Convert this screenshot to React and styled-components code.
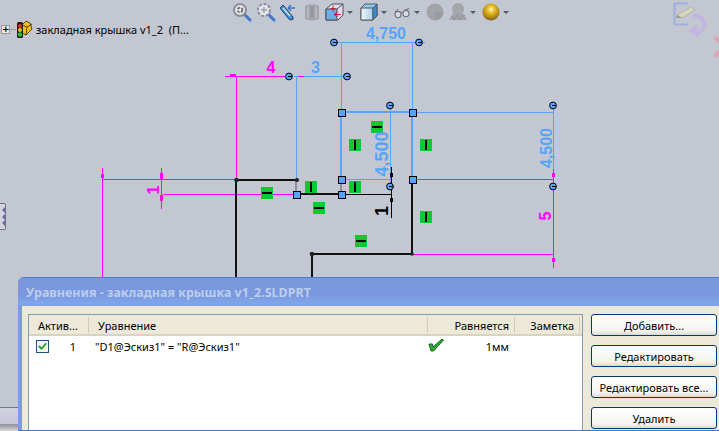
import React from "react";
import styled, { createGlobalStyle } from "styled-components";

const Global = createGlobalStyle`
  html, body { margin: 0; padding: 0; background: #c3c7d2; }
  #root { width: 719px; height: 431px; }
`;

const BLUE = "#55a5ff";
const PINK = "#ff00ff";
const UI_FONT = `"Noto Sans", "DejaVu Sans", sans-serif`;

// sketch data, coordinates are the model space of the graphics area
const blueLines = [
  [296, 76, 296, 180],
  [293, 76, 347, 76],
  [330, 42, 424, 42],
  [341, 42, 341, 112],
  [412, 42, 412, 112],
  [341, 179, 390, 179],
  [390, 105, 390, 186],
  [412, 112, 553, 112],
  [553, 105, 553, 168],
];
const pinkLines = [
  [102, 167, 102, 277],
  [102, 179, 237, 179],
  [161, 167, 161, 208],
  [162, 194, 296, 194],
  [224, 76, 284, 76],
  [297, 76, 303, 76],
  [236, 76, 236, 179],
  [412, 179, 553, 179],
  [412, 254, 553, 254],
  [553, 168, 553, 267],
];
const blueThick = [
  [340, 112, 413, 112],
  [341, 112, 341, 179],
  [412, 112, 412, 179],
];
const blackThick = [
  [236, 180, 298, 180],
  [236, 180, 236, 280],
  [297, 194, 341, 194],
  [412, 179, 412, 255],
  [413, 254, 312, 254],
  [312, 254, 312, 280],
];
const handles = [
  [289, 76], [347, 76], [334, 42], [419, 42], [390, 105],
  [390, 186], [553, 105], [553, 186],
];
const squares = [
  [341, 112], [412, 112], [341, 179], [412, 179], [296, 194], [341, 194],
];
const horizontal = [[267, 193], [319, 208], [377, 127], [361, 241]];
const vertical = [[311, 187], [355, 187], [355, 145], [426, 145], [426, 217]];

const Ln = ({ l, ...rest }) => <line x1={l[0]} y1={l[1]} x2={l[2]} y2={l[3]} {...rest} />;

const Sketch = () => (
  <SketchSvg width="719" height="431" viewBox="0 0 719 431">
    <g strokeWidth="1" shapeRendering="crispEdges">
      {blueLines.map((l, i) => <Ln key={i} l={l.map((v) => v + 0.5)} stroke={BLUE} />)}
      {pinkLines.map((l, i) => <Ln key={i} l={l.map((v) => v + 0.5)} stroke={PINK} />)}
    </g>
    <g fill={PINK} shapeRendering="crispEdges">
      <rect x="101" y="174" width="3" height="4" />
      <rect x="160" y="173" width="3" height="6" />
      <rect x="160" y="195" width="3" height="6" />
      <rect x="230" y="74" width="6" height="3" />
      <rect x="552" y="173" width="3" height="4" />
      <rect x="552" y="258" width="3" height="4" />
    </g>
    <g stroke="#8c8e96" strokeWidth="2" shapeRendering="crispEdges">
      <line x1="296" y1="181" x2="296" y2="194" />
      <line x1="341" y1="180" x2="341" y2="194" />
    </g>
    <g stroke={BLUE} strokeWidth="2" shapeRendering="crispEdges">
      {blueThick.map((l, i) => <Ln key={i} l={l} />)}
    </g>
    <g stroke="#111" strokeWidth="2" shapeRendering="crispEdges">
      {blackThick.map((l, i) => <Ln key={i} l={l} />)}
    </g>
    <g stroke="#000" strokeWidth="1" shapeRendering="crispEdges">
      <line x1="342" y1="194.5" x2="392" y2="194.5" />
      <line x1="391.5" y1="167" x2="391.5" y2="218" />
    </g>
    <g fill="#000" shapeRendering="crispEdges">
      <rect x="390" y="173" width="3" height="4" />
      <rect x="390" y="198" width="3" height="4" />
    </g>
    <g fill="#222">
      <circle cx="236.5" cy="180" r="2.3" />
      <circle cx="297" cy="180" r="2" />
      <circle cx="312" cy="254" r="2.3" />
      <circle cx="412" cy="254" r="1.8" />
    </g>
    {handles.map(([x, y], i) => (
      <g key={i}>
        <circle cx={x} cy={y + 0.5} r="3.4" fill={BLUE} stroke="#000" strokeWidth="1" />
        <line x1={x - 1} y1={y + 0.5} x2={x + 3} y2={y + 0.5} stroke="#000" strokeWidth="1" />
      </g>
    ))}
    {squares.map(([x, y], i) => (
      <rect key={i} x={x - 3} y={y - 3} width="7" height="7" fill={BLUE} stroke="#000" strokeWidth="1" shapeRendering="crispEdges" />
    ))}
    {horizontal.map(([x, y], i) => (
      <g key={i} shapeRendering="crispEdges">
        <rect x={x - 6} y={y - 6} width="12" height="12" fill="#0cc832" />
        <rect x={x - 5} y={y - 1} width="10" height="2" fill="#000" />
      </g>
    ))}
    {vertical.map(([x, y], i) => (
      <g key={i} shapeRendering="crispEdges">
        <rect x={x - 6} y={y - 6} width="12" height="12" fill="#0cc832" />
        <rect x={x - 1} y={y - 5} width="2" height="10" fill="#000" />
      </g>
    ))}
    <DimText x="271" y="73" fill={PINK} $size={16} textAnchor="middle">4</DimText>
    <DimText x="315.5" y="73" fill={BLUE} $size={16} textAnchor="middle">3</DimText>
    <DimText x="386" y="39" fill={BLUE} $size={16} textAnchor="middle">4,750</DimText>
    <DimText transform="translate(388 154) rotate(-90)" fill={BLUE} $size={18} textAnchor="middle">4,500</DimText>
    <DimText transform="translate(552 148) rotate(-90)" fill={BLUE} $size={16} textAnchor="middle">4,500</DimText>
    <DimText transform="translate(159 190) rotate(-90)" fill={PINK} $size={16} textAnchor="middle">1</DimText>
    <DimText transform="translate(388 211) rotate(-90)" fill="#000" $size={18} textAnchor="middle">1</DimText>
    <DimText transform="translate(551 216) rotate(-90)" fill={PINK} $size={16} textAnchor="middle">5</DimText>
  </SketchSvg>
);

const Magnifier = ({ dashed }) => (
  <svg width="20" height="20" viewBox="0 0 20 20">
    <line x1="12" y1="12" x2="18" y2="18" stroke="#3f78c8" strokeWidth="3" strokeLinecap="round" />
    <circle cx="8" cy="8" r="6" fill="#e4e6ea" stroke="#8a8e98" strokeWidth="2" strokeDasharray={dashed ? "3 1.5" : undefined} />
    {dashed ? (
      <path d="M5 8h6M8 5v6" stroke="#9a9ea6" strokeWidth="1.4" />
    ) : (
      <circle cx="8" cy="8" r="2.4" fill="none" stroke="#5c6068" strokeWidth="1.6" strokeDasharray="2.4 1.4" />
    )}
  </svg>
);

const PrevView = () => (
  <svg width="20" height="20" viewBox="0 0 20 20">
    <path d="M2 6 L5 3 L15 15 Q16 18 13 18 Q11 18 10 16 Z" fill="#3f8fd8" stroke="#2c3f63" strokeWidth="1" />
    <path d="M5 6 L12 14" stroke="#cfe6fa" strokeWidth="1.4" />
    <path d="M10 6h7M10 6l3-3M10 6l3 3" fill="none" stroke="#3f78c8" strokeWidth="1.6" />
  </svg>
);

const SectionView = () => (
  <svg width="20" height="20" viewBox="0 0 20 20">
    <path d="M3 4 Q10 0 17 4 V17 Q10 20 3 17 Z" fill="#a4a6ac" />
    <path d="M6 5 V16 M14 5 V16" stroke="#b5b7bc" strokeWidth="2" />
    <path d="M8 5 Q10 4 12 5 V16 H8 Z" fill="#97999f" />
  </svg>
);

const OrientCube = () => (
  <svg width="20" height="20" viewBox="0 0 20 20">
    <path d="M1 7 L7 2 H18 V13 L13 18 H1 Z" fill="#dfe1e6" stroke="#4a4e58" strokeWidth="1" />
    <path d="M1 7 H12 V18 H1 Z" fill="#6aaeea" stroke="#4a4e58" strokeWidth="1" />
    <path d="M12 7 L18 2" stroke="#4a4e58" strokeWidth="1" />
    <path d="M8 3.5v6M5.5 6.5h5M9 12.5h7M12 10l-3 2.5 3 2.5" fill="none" stroke="#c41f2e" strokeWidth="1" />
  </svg>
);

const DisplayBox = () => (
  <svg width="20" height="20" viewBox="0 0 20 20">
    <defs>
      <linearGradient id="boxFront" x1="0" x2="1" y1="0" y2="0">
        <stop offset="0" stopColor="#f2f6fa" />
        <stop offset="1" stopColor="#a8cfee" />
      </linearGradient>
    </defs>
    <path d="M2 6 L6 2 H18 V14 L14 18 H2 Z" fill="#8fc6ee" stroke="#55585f" strokeWidth="1" />
    <path d="M2 6 H14 V18 H2 Z" fill="url(#boxFront)" stroke="#55585f" strokeWidth="1" />
    <path d="M14 6 L18 2 V14 L14 18 Z" fill="#2f8ee0" stroke="#55585f" strokeWidth="1" />
  </svg>
);

const Glasses = () => (
  <svg width="20" height="20" viewBox="0 0 20 20">
    <ellipse cx="6" cy="12.5" rx="3" ry="3.2" fill="#d8dbe2" stroke="#6f727b" strokeWidth="1.2" />
    <ellipse cx="14" cy="11.5" rx="3" ry="3.2" fill="#d8dbe2" stroke="#6f727b" strokeWidth="1.2" />
    <path d="M9 11 Q10 9.5 11 10.5 M3 10 L6 7 M13 8 L17 6.5" fill="none" stroke="#6f727b" strokeWidth="1" />
  </svg>
);

const GraySphere = () => (
  <svg width="20" height="20" viewBox="0 0 20 20">
    <circle cx="10" cy="10" r="8.5" fill="#a2a4aa" />
    <path d="M10 10 H18.5 A8.5 8.5 0 0 1 10 18.5 Z" fill="#999ba1" />
  </svg>
);

const Scene = () => (
  <svg width="20" height="20" viewBox="0 0 20 20">
    <circle cx="10" cy="7" r="6" fill="#a4a6ac" />
    <path d="M5 11 H15 L19 18 H1 Z" fill="#a4a6ac" />
    <path d="M3 14 L8 18 M8 12 L14 18 M13 12 L18 17 M17 13 L11 18 M11 12 L5 18" stroke="#8f9197" strokeWidth="1" />
  </svg>
);

const GoldBall = () => (
  <svg width="20" height="20" viewBox="0 0 20 20">
    <defs>
      <radialGradient id="gold" cx="0.5" cy="0.35" r="0.65">
        <stop offset="0" stopColor="#fff6c0" />
        <stop offset="0.35" stopColor="#e8bb22" />
        <stop offset="0.8" stopColor="#a87f12" />
        <stop offset="1" stopColor="#6d5a20" />
      </radialGradient>
    </defs>
    <circle cx="10" cy="10" r="8.5" fill="url(#gold)" />
  </svg>
);

const tools = [
  { id: "zoomfit", icon: <Magnifier />, gap: 0 },
  { id: "zoomarea", icon: <Magnifier dashed />, gap: 4 },
  { id: "prev", icon: <PrevView />, gap: 2 },
  { id: "section", icon: <SectionView />, gap: 4 },
  { id: "orient", icon: <OrientCube />, gap: 3, caret: true },
  { id: "display", icon: <DisplayBox />, gap: 6, caret: true },
  { id: "hide", icon: <Glasses />, gap: 5, caret: true },
  { id: "sphere", icon: <GraySphere />, gap: 5 },
  { id: "scene", icon: <Scene />, gap: 3, caret: true },
  { id: "gold", icon: <GoldBall />, gap: 5, caret: true },
];

const TrafficIcon = () => (
  <svg width="17" height="18" viewBox="0 0 17 18">
    <path d="M6 5 L10 1 L14 3 L16 9 L10 15 L6 13 Z" fill="#f4c020" stroke="#5a4410" strokeWidth="1" />
    <path d="M6 5 L11 7 L16 4 M11 7 L10 15" fill="none" stroke="#5a4410" strokeWidth="1" />
    <rect x="1" y="2" width="6" height="16" rx="1.5" fill="#1d1d1d" />
    <circle cx="4" cy="6" r="2" fill="#d63018" />
    <circle cx="4" cy="10" r="2" fill="#e8c020" />
    <circle cx="4" cy="14.5" r="2.2" fill="#28c030" />
  </svg>
);

const CornerIcons = () => (
  <svg width="79" height="60" viewBox="0 0 79 60">
    <path d="M48 3.5 H34.5 V24.5 H48" fill="none" stroke="#a2aee0" strokeWidth="2" />
    <path d="M37 15 L51 7 L55 10 L42 18 Z" fill="#d8d5b8" stroke="#b4b4b8" strokeWidth="1" />
    <path d="M37 15 L42 18 L36 18 Z" fill="#9a9aa0" />
    <path d="M53 15 Q66 17 64 27 Q60 36 52 31" fill="none" stroke="#c2b5e0" strokeWidth="4" />
    <path d="M48 30 L57 24 L58 38 Z" fill="#c2b5e0" />
    <path d="M75 37 L79 42 M75 57 L79 51" stroke="#dfa4b0" strokeWidth="4" />
  </svg>
);

const Check = () => (
  <svg width="12" height="12" viewBox="0 0 12 12">
    <path d="M2 6 L5 9 L10 3" fill="none" stroke="#21a121" strokeWidth="2" />
  </svg>
);

const BigCheck = () => (
  <svg width="16" height="16" viewBox="0 0 16 16">
    <path d="M1 7 L3 14 L5.5 14 L15.5 3 L14 2 L5 10 L4.5 7 Z" fill="#36a836" stroke="#0c6a1c" strokeWidth="1" />
  </svg>
);

const App = () => (
  <Stage>
    <Global />
    <Sketch />
    <Toolbar>
      {tools.map((t) => (
        <ToolItem key={t.id} $gap={t.gap}>
          {t.icon}
          {t.caret && <Caret />}
        </ToolItem>
      ))}
    </Toolbar>
    <Corner>
      <CornerIcons />
    </Corner>
    <TreeRow>
      <Expander>+</Expander>
      <TreeDash />
      <TrafficIcon />
      <TreeLabel>закладная крышка v1_2  (П...</TreeLabel>
    </TreeRow>
    <SideTab>
      <span />
      <span />
      <span />
    </SideTab>
    <BottomLeft />
    <Dialog>
      <TitleBar>Уравнения - закладная крышка v1_2.SLDPRT</TitleBar>
      <DialogBody>
        <ListBox>
          <ListHead>
            <HeadCell $w={60}>Актив...</HeadCell>
            <HeadCell $w={339} $pad={9}>Уравнение</HeadCell>
            <HeadCell $w={87} $right>Равняется</HeadCell>
            <HeadCell $w={65} $right>Заметка</HeadCell>
          </ListHead>
          <ListRow>
            <RowCheck>
              <CheckBox><Check /></CheckBox>
            </RowCheck>
            <RowNum>1</RowNum>
            <RowEq>"D1@Эскиз1" = "R@Эскиз1"</RowEq>
            <RowState><BigCheck /></RowState>
            <RowValue>1мм</RowValue>
          </ListRow>
        </ListBox>
        <Buttons>
          <PushButton>Добавить...</PushButton>
          <PushButton>Редактировать</PushButton>
          <PushButton>Редактировать все...</PushButton>
          <PushButton>Удалить</PushButton>
        </Buttons>
      </DialogBody>
    </Dialog>
  </Stage>
);

const Stage = styled.div`
  position: relative;
  width: 719px;
  height: 431px;
  overflow: hidden;
  background: #c3c7d2;
  font-family: ${UI_FONT};
`;

const SketchSvg = styled.svg`
  position: absolute;
  left: 0;
  top: 0;
`;

const DimText = styled.text`
  font-family: "Liberation Sans", sans-serif;
  font-weight: 700;
  font-size: ${(p) => p.$size}px;
`;

const Toolbar = styled.div`
  position: absolute;
  left: 232px;
  top: 2px;
  display: flex;
  align-items: center;
  height: 20px;
`;

const ToolItem = styled.div`
  display: flex;
  align-items: center;
  margin-left: ${(p) => p.$gap}px;
`;

const Caret = styled.i`
  width: 0;
  height: 0;
  margin-left: 2px;
  border-left: 3px solid transparent;
  border-right: 3px solid transparent;
  border-top: 3px solid #555963;
`;

const Corner = styled.div`
  position: absolute;
  right: 0;
  top: 0;
  width: 79px;
  height: 60px;
`;

const TreeRow = styled.div`
  position: absolute;
  left: 1px;
  top: 20px;
  display: flex;
  align-items: center;
  height: 18px;
  color: #000;
`;

const Expander = styled.div`
  width: 7px;
  height: 7px;
  border: 1px solid #9a9a90;
  background: #eceae0;
  font-family: "DejaVu Sans", sans-serif;
  font-size: 9px;
  line-height: 7px;
  font-weight: 700;
  text-align: center;
`;

const TreeDash = styled.div`
  width: 6px;
  height: 1px;
  background: #9a9a90;
`;

const TreeLabel = styled.div`
  margin-left: 3px;
  font-size: 11px;
  white-space: pre;
`;

const SideTab = styled.div`
  position: absolute;
  left: 0;
  top: 203px;
  width: 6px;
  height: 27px;
  padding: 3px 0;
  box-sizing: border-box;
  display: flex;
  flex-direction: column;
  justify-content: space-between;
  align-items: flex-end;
  background: #d2d4dc;
  border: 1px solid #72757f;
  border-left: 0;
  border-radius: 0 2px 2px 0;
  span {
    width: 0;
    height: 0;
    border-top: 3px solid transparent;
    border-bottom: 3px solid transparent;
    border-right: 3px solid #6a66b0;
  }
`;

const BottomLeft = styled.div`
  position: absolute;
  left: 0;
  top: 407px;
  width: 18px;
  height: 24px;
  box-sizing: border-box;
  border-top: 1px solid #74767e;
  background: linear-gradient(#d0d2e2, #c6c8da 70%, #8f919a 72%, #dcdcd8);
`;

const Dialog = styled.div`
  position: absolute;
  left: 18px;
  top: 277px;
  width: 701px;
  height: 154px;
  box-sizing: border-box;
  display: flex;
  flex-direction: column;
  border-top: 1px solid #4d7ec9;
  border-bottom: 1px solid #4577c8;
  border-radius: 6px 0 0 0;
  background: #7d9be0;
  overflow: hidden;
`;

const TitleBar = styled.div`
  flex: 0 0 28px;
  height: 28px;
  padding-left: 8px;
  display: flex;
  align-items: center;
  background: linear-gradient(#7b98dd, #7a97df 60%, #7fa6e8 90%, #7aa0e4);
  color: #bdcdec;
  font-family: ${UI_FONT};
  font-size: 12.5px;
  font-weight: 700;
  white-space: nowrap;
`;

const DialogBody = styled.div`
  flex: 1;
  min-height: 0;
  margin-left: 4px;
  display: flex;
  padding: 8px 2px 0 6px;
  gap: 8px;
  background: #ece9d8;
`;

const ListBox = styled.div`
  width: 555px;
  box-sizing: border-box;
  border: 1px solid #7f9db9;
  border-bottom: 0;
  background: #fff;
`;

const ListHead = styled.div`
  display: flex;
  height: 21px;
  box-sizing: border-box;
  background: #ece9d8;
  border-bottom: 2px solid #d8d4c0;
`;

const HeadCell = styled.div`
  width: ${(p) => p.$w}px;
  box-sizing: border-box;
  padding: 0 5px 0 ${(p) => p.$pad ?? 9}px;
  display: flex;
  align-items: center;
  justify-content: ${(p) => (p.$right ? "flex-end" : "flex-start")};
  font-size: 11px;
  color: #000;
  border-right: 1px solid #d0ccb8;
  margin: 2px 0 1px;
  white-space: nowrap;
`;

const ListRow = styled.div`
  display: flex;
  align-items: center;
  height: 20px;
  font-size: 11px;
  color: #000;
`;

const RowCheck = styled.div`
  width: 38px;
  padding-left: 7px;
  box-sizing: border-box;
`;

const CheckBox = styled.div`
  width: 13px;
  height: 13px;
  box-sizing: border-box;
  border: 1px solid #1c5180;
  background: #f4f4ec;
  display: flex;
  align-items: center;
  justify-content: center;
`;

const RowNum = styled.div`
  width: 9px;
  text-align: right;
  margin-right: 19px;
`;

const RowEq = styled.div`
  width: 333px;
  white-space: pre;
`;

const RowState = styled.div`
  width: 35px;
  display: flex;
  margin-top: -2px;
`;

const RowValue = styled.div`
  width: 46px;
  text-align: right;
`;

const Buttons = styled.div`
  display: flex;
  flex-direction: column;
  gap: 9px;
  width: 126px;
`;

const PushButton = styled.button`
  flex: 0 0 22px;
  height: 22px;
  padding: 0;
  box-sizing: border-box;
  border: 1px solid #003c74;
  border-radius: 3px;
  background: linear-gradient(#ffffff, #f4f3ee 80%, #dcd8cc);
  color: #000;
  font-family: ${UI_FONT};
  font-size: 11px;
  white-space: nowrap;
`;

export default App;
